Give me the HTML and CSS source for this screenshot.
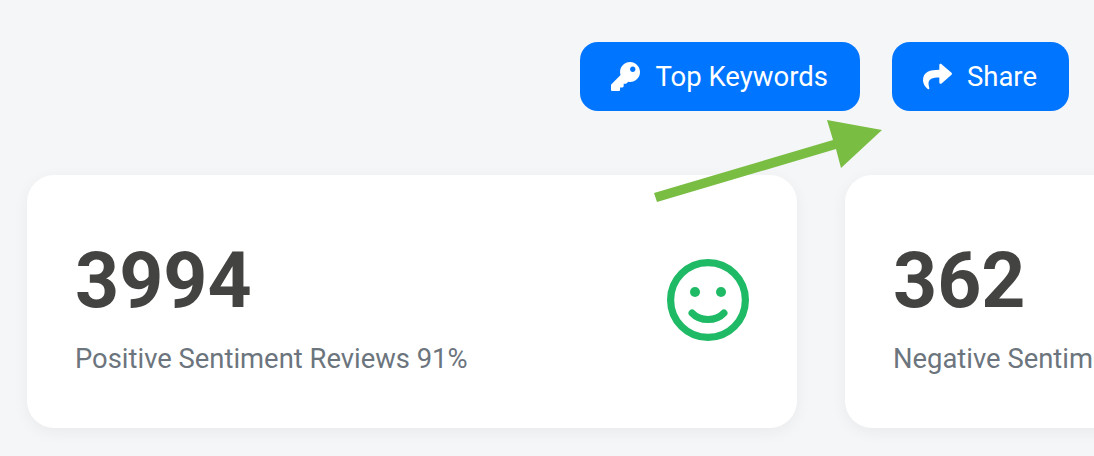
FILE: index.html
```html
<!DOCTYPE html>
<html lang="en">
<head>
    <meta charset="UTF-8" />
    <title>Sentiment Reviews</title>
    <link rel="stylesheet" href="styles.css">
</head>
<body>
<div class="actions">
    <button type="button" class="btn">
        <svg class="btn-icon" viewBox="0 0 512 512"><path d="M512 176.001C512 273.203 433.202 352 336 352c-11.22 0-22.19-1.062-32.827-3.069l-24.012 27.014A23.999 23.999 0 0 1 261.223 384H224v40c0 13.255-10.745 24-24 24h-40v40c0 13.255-10.745 24-24 24H24c-13.255 0-24-10.745-24-24v-78.059c0-6.365 2.529-12.47 7.029-16.971l161.802-161.802C163.108 213.814 160 195.271 160 176 160 78.798 238.797.001 335.999 0 433.488-.001 512 78.511 512 176.001zM336 128c0 26.51 21.49 48 48 48s48-21.49 48-48-21.49-48-48-48-48 21.49-48 48z"/></svg>
        Top Keywords
    </button>
    <button type="button" class="btn">
        <svg class="btn-icon" viewBox="0 0 512 512"><path d="M503.691 189.836L327.687 37.851C312.281 24.546 288 35.347 288 56.015v80.053C127.371 137.907 0 170.1 0 322.326c0 61.441 39.581 122.309 83.333 154.132 13.653 9.931 33.111-2.533 28.077-18.631C66.066 312.814 132.917 274.316 288 272.085V360c0 20.7 24.3 31.453 39.687 18.164l176.004-152c11.071-9.562 11.086-26.753 0-36.328z"/></svg>
        Share
    </button>
</div>

<div class="cards">
    <div class="card">
        <div class="card-text">
            <div class="card-num">3994</div>
            <div class="card-label">Positive Sentiment Reviews 91%</div>
        </div>
        <svg class="card-icon" viewBox="0 0 82 82">
            <circle cx="41" cy="41" r="37.4" fill="none" stroke="#1fba66" stroke-width="7.2"/>
            <circle cx="28" cy="33" r="5" fill="#1fba66"/>
            <circle cx="54" cy="33" r="5" fill="#1fba66"/>
            <path d="M25 54c4 4.300 10 6.500 16 6.500s12-2.200 16-6.500" fill="none" stroke="#1fba66" stroke-width="7" stroke-linecap="round"/>
        </svg>
    </div>
    <div class="card">
        <div class="card-text">
            <div class="card-num">362</div>
            <div class="card-label">Negative Sentiment Reviews 9%</div>
        </div>
    </div>
</div>

<!-- annotation arrow -->
<svg class="arrow" viewBox="0 0 1094 456">
    <polygon fill="#7abd43" points="654,193 833,140 827,120 882,130 841,168 836,149 657,202"/>
</svg>
</body>
</html>
```

FILE: styles.css
```css
html, body {
    height: 100%;
}
body {
    margin: 0;
    padding-top: 42px;
    box-sizing: border-box;
    background: #f5f6f8;
    font-family: Roboto, "Liberation Sans", sans-serif;
    overflow: hidden;
}
.actions {
    display: flex;
    justify-content: flex-end;
    gap: 32px;
    padding-right: 25px;
}
.btn {
    display: flex;
    align-items: center;
    gap: 15px;
    height: 69px;
    padding: 0 32px 0 31px;
    background: #0075ff;
    border: none;
    border-radius: 18px;
    color: white;
    font-family: inherit;
    font-size: 27.5px;
    font-weight: 400;
}
.btn-icon {
    width: 29px;
    height: 29px;
    fill: white;
}
.cards {
    display: flex;
    gap: 48px;
    margin-top: 64px;
    padding-left: 27px;
}
.card {
    flex: none;
    box-sizing: border-box;
    width: 770px;
    height: 253px;
    padding: 0 48px 3px;
    display: flex;
    align-items: center;
    justify-content: space-between;
    background: white;
    border-radius: 27px;
    box-shadow: 0 4px 16px rgba(0, 0, 0, 0.05);
}
.card-text {
    align-self: flex-start;
    margin-top: 61px;
}
.card-num {
    font-size: 77px;
    font-weight: 700;
    line-height: 90px;
    color: #434341;
}
.card-label {
    margin-top: 17px;
    font-size: 27.4px;
    color: #6c757d;
}
.card-icon {
    width: 82px;
    height: 82px;
}
.arrow {
    position: absolute;
    left: 0;
    top: 0;
    width: 1094px;
    height: 456px;
}
```
